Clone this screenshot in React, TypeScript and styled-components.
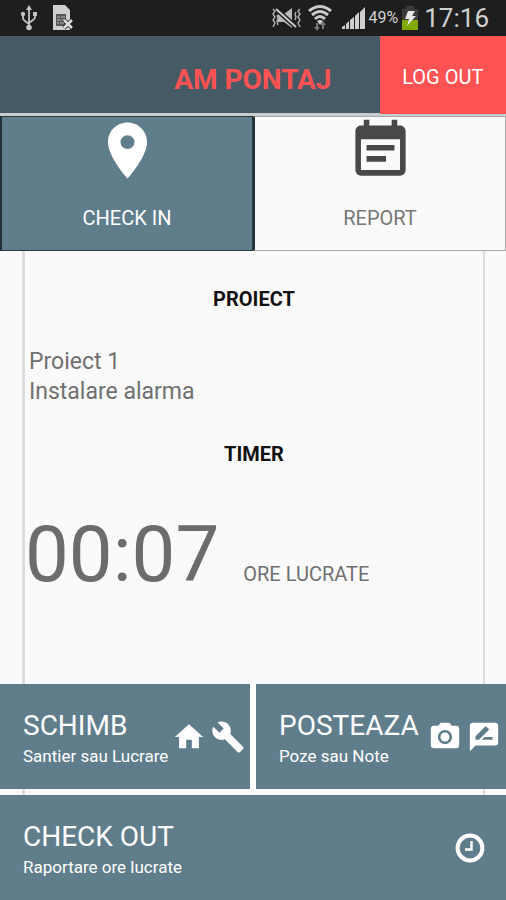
import React from "react";
import styled, { createGlobalStyle } from "styled-components";
import {
  MdBuild,
  MdEventNote,
  MdHome,
  MdPhotoCamera,
  MdPlace,
  MdRateReview,
} from "react-icons/md";

const slate = "#607d8b";
const darkSlate = "#455a64";
const coral = "#ff5252";
const paper = "#fafafa";

const GlobalStyle = createGlobalStyle`
  *, *::before, *::after { box-sizing: border-box; }
  body {
    margin: 0;
    background: ${paper};
    font-family: Roboto, "Liberation Sans", sans-serif;
  }
  button { font: inherit; border: 0; margin: 0; cursor: pointer; }
  h1, h2, p { margin: 0; }
  svg { display: block; flex: none; }
`;

const Screen = styled.div`
  display: flex;
  flex-direction: column;
  min-height: 100vh;
`;

const StatusBar = styled.div`
  display: flex;
  align-items: center;
  justify-content: space-between;
  height: 36px;
  padding: 0 17px 0 20px;
  background: #1e1e1e;
  color: #d0d0d0;
`;

const StatusGroup = styled.div<{ $gap: number }>`
  display: flex;
  align-items: center;
  gap: ${(p) => p.$gap}px;
`;

const Battery = styled.span`
  font-size: 16px;
  line-height: 36px;
`;

const Clock = styled.time`
  margin-left: 2px;
  font-size: 26px;
  line-height: 36px;
`;

const Header = styled.header`
  display: grid;
  grid-template-columns: 3fr 1fr;
  height: 80px;
  border-bottom: 3px solid #c9cccd;
  background: ${darkSlate};
`;

const Title = styled.h1`
  padding: 10px 48px 0 0;
  text-align: right;
  color: ${coral};
  font-size: 28px;
  font-weight: 700;
  line-height: 68px;
`;

const LogOut = styled.button`
  padding: 4px 0 0;
  background: ${coral};
  color: #fff;
  font-size: 20px;
`;

const Tabs = styled.nav`
  display: grid;
  grid-template-columns: 1fr 1fr;
  height: 135px;
`;

const Tab = styled.button<{ $active?: boolean }>`
  display: flex;
  flex-direction: column;
  align-items: center;
  gap: 20px;
  padding: 0;
  border: 1px solid ${(p) => (p.$active ? "#263a44" : "#a8a8a8")};
  border-left: 2px solid #22303a;
  background: ${(p) => (p.$active ? slate : paper)};
  color: ${(p) => (p.$active ? "#fff" : "#777")};
  font-size: 20px;
  line-height: 28px;
`;

const Rails = styled.div`
  margin: 0 21px 0 22px;
  border: solid #dcdcdc;
  border-width: 0 2px 0 3px;
`;

const Content = styled(Rails).attrs({ as: "main" })`
  flex: 1;
  display: flex;
  flex-direction: column;
  padding-top: 36px;
  color: #707070;
`;

const Strip = styled(Rails)`
  height: 6px;
`;

const SectionTitle = styled.h2`
  text-align: center;
  color: #111;
  font-size: 20px;
  font-weight: 700;
  line-height: 24px;
`;

const Project = styled.div`
  padding: 36px 4px 35px;
  font-size: 23px;
  line-height: 30px;
`;

const TimerRow = styled.div`
  display: flex;
  align-items: baseline;
  gap: 24px;
  padding-top: 47px;
`;

const Elapsed = styled.span`
  color: #6c6c6c;
  font-size: 78px;
  line-height: 84px;
`;

const Unit = styled.span`
  font-size: 20px;
`;

const Actions = styled.div`
  display: grid;
  grid-template-columns: 1fr 1fr;
  gap: 6px;
  background: #fff;
`;

const Action = styled.button<{ $wide?: boolean }>`
  display: flex;
  align-items: center;
  justify-content: space-between;
  width: 100%;
  height: 105px;
  padding: 0 ${(p) => (p.$wide ? 21 : 5)}px 0 23px;
  background: ${slate};
  color: #fff;
  text-align: left;
  white-space: nowrap;
`;

const ActionText = styled.span`
  display: flex;
  flex-direction: column;
  padding-top: 4px;
`;

const ActionName = styled.span`
  font-size: 28px;
  line-height: 34px;
`;

const ActionHint = styled.span`
  font-size: 17px;
  line-height: 26px;
`;

const ActionIcons = styled.span`
  display: flex;
  gap: 5px;
`;

function UsbIcon() {
  return (
    <svg width="18" height="26" viewBox="0 0 18 26" fill="none" stroke="#c4c4c4" strokeWidth="1.8">
      <path d="M9 4v19M3 10v3q0 2 2 3l4 3M15 9v3q0 2-2 3l-4 3" />
      <path d="M9 0l3 5H6z" fill="#c4c4c4" stroke="none" />
      <circle cx="9" cy="22.500" r="2.800" fill="#c4c4c4" stroke="none" />
      <circle cx="3" cy="9" r="2.200" fill="#c4c4c4" stroke="none" />
      <path d="M13 7h4v4h-4z" fill="#c4c4c4" stroke="none" />
    </svg>
  );
}

function FileErrorIcon() {
  return (
    <svg width="22" height="26" viewBox="0 0 22 26">
      <path d="M1 0h12l5 5v20H1z" fill="#cfcfcf" />
      <path d="M4 9h10v12H4z" fill="#555" />
      <path d="M5 12h3m1 0h4M5 15h4m1 0h3M5 18h2m1 0h4" stroke="#bbb" strokeWidth="1" />
      <path d="M12 15l8 8m0-8l-8 8" stroke="#1e1e1e" strokeWidth="4" />
      <path d="M12 15l8 8m0-8l-8 8" stroke="#dedede" strokeWidth="2.600" />
    </svg>
  );
}

function MutedIcon() {
  return (
    <svg width="31" height="22" viewBox="0 0 31 22" fill="none">
      <path d="M7 7h6l8-6v20l-8-6H7z" fill="#b8b8b8" />
      <path d="M5 2l20 18" stroke="#1e1e1e" strokeWidth="5" />
      <path d="M5 2l20 18" stroke="#c8c8c8" strokeWidth="2" />
      <path
        d="M2 2l2 2-2 3 2 3-2 3 2 3-2 4M29 2l-2 2 2 3-2 3 2 3-2 3 2 4M25 5l-1 2 1 3-1 3M6 8l1 3-1 3 1 4"
        stroke="#b0b0b0"
        strokeWidth="1.400"
      />
    </svg>
  );
}

function WifiIcon() {
  return (
    <svg width="26" height="28" viewBox="0 0 26 28" fill="none">
      <path d="M2 7q11-9 22 0M5 11q8-7 16 0M8 15q5-5 10 0" stroke="#c9c9c9" strokeWidth="3" />
      <path d="M10 17q3-2 6 0l-3 4z" fill="#d0d0d0" />
      <path d="M10 19v6M16 20v5" stroke="#777" strokeWidth="2" />
      <path d="M7 23h6l-3 4zM13 21h6l-3-4z" fill="#777" />
    </svg>
  );
}

function SignalIcon() {
  return (
    <svg width="25" height="24" viewBox="0 0 25 24" fill="#cfcfcf">
      <path d="M1 23v-2l3-2v4zM5 23v-5l3-3v8zM9 23v-9l4-3v12zM14 23V10l4-4v17zM19 23V6l5-5v22z" />
    </svg>
  );
}

function BatteryIcon() {
  return (
    <svg width="18" height="26" viewBox="0 0 18 26">
      <path d="M5 1h8v3h4v21H1V4h4z" fill="#3c3c3c" />
      <path d="M1 15h16v10H1z" fill="#7fa900" />
      <path d="M7 6h7l-3 5h4L6 21l2-7H4z" fill="#e6e6e6" />
    </svg>
  );
}

function CheckOutIcon() {
  return (
    <svg width="30" height="30" viewBox="0 0 30 30" fill="none" stroke="#fff">
      <circle cx="15" cy="15" r="12.400" strokeWidth="4" />
      <path d="M16.500 8v8.500H10" strokeWidth="2.400" />
    </svg>
  );
}

export default function App() {
  return (
    <>
      <GlobalStyle />
      <Screen>
        <StatusBar>
          <StatusGroup $gap={14}>
            <UsbIcon />
            <FileErrorIcon />
          </StatusGroup>
          <StatusGroup $gap={8}>
            <StatusGroup $gap={5}>
              <MutedIcon />
              <WifiIcon />
            </StatusGroup>
            <StatusGroup $gap={3}>
              <SignalIcon />
              <Battery>49%</Battery>
              <BatteryIcon />
              <Clock>17:16</Clock>
            </StatusGroup>
          </StatusGroup>
        </StatusBar>
        <Header>
          <Title>AM PONTAJ</Title>
          <LogOut type="button">LOG OUT</LogOut>
        </Header>
        <Tabs>
          <Tab type="button" $active aria-current="page">
            <MdPlace size={67} />
            CHECK IN
          </Tab>
          <Tab type="button">
            <MdEventNote size={67} color="#484848" />
            REPORT
          </Tab>
        </Tabs>
        <Content>
          <SectionTitle>PROIECT</SectionTitle>
          <Project>
            <p>Proiect 1</p>
            <p>Instalare alarma</p>
          </Project>
          <SectionTitle>TIMER</SectionTitle>
          <TimerRow>
            <Elapsed>00:07</Elapsed>
            <Unit>ORE LUCRATE</Unit>
          </TimerRow>
        </Content>
        <Actions>
          <Action type="button">
            <ActionText>
              <ActionName>SCHIMB</ActionName>
              <ActionHint>Santier sau Lucrare</ActionHint>
            </ActionText>
            <ActionIcons>
              <MdHome size={34} />
              <MdBuild size={34} />
            </ActionIcons>
          </Action>
          <Action type="button">
            <ActionText>
              <ActionName>POSTEAZA</ActionName>
              <ActionHint>Poze sau Note</ActionHint>
            </ActionText>
            <ActionIcons>
              <MdPhotoCamera size={34} />
              <MdRateReview size={34} />
            </ActionIcons>
          </Action>
        </Actions>
        <Strip />
        <Action type="button" $wide>
          <ActionText>
            <ActionName>CHECK OUT</ActionName>
            <ActionHint>Raportare ore lucrate</ActionHint>
          </ActionText>
          <CheckOutIcon />
        </Action>
      </Screen>
    </>
  );
}
